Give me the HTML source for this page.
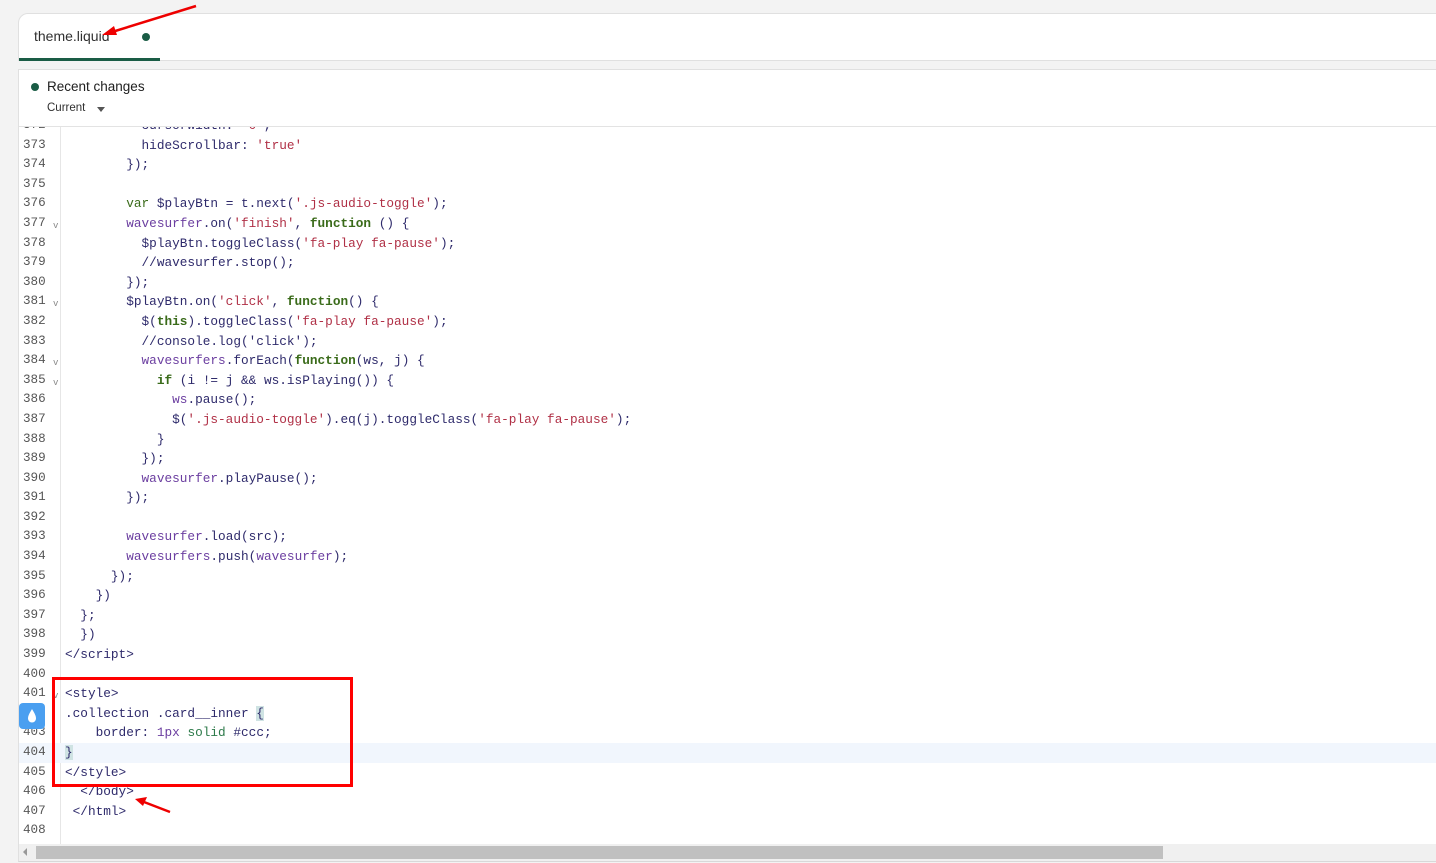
<!DOCTYPE html>
<html><head><meta charset="utf-8"><style>
*{margin:0;padding:0;box-sizing:border-box}
body{width:1436px;height:863px;background:#f3f3f3;position:relative;overflow:hidden;font-family:"Liberation Sans",sans-serif}
.tabbar{position:absolute;left:18px;top:13px;width:1430px;height:48px;background:#fff;border:1px solid #e0e0e0;border-radius:10px 0 0 0}
.tab{position:absolute;left:0;top:0;width:141px;height:47px;border-bottom:3px solid #1a5c45}
.tab span{position:absolute;left:15px;top:14px;font-size:14px;color:#303030}
.dot{position:absolute;width:8px;height:8px;border-radius:50%;background:#1a5c45}
.panel{position:absolute;left:18px;top:69px;width:1430px;height:793px;background:#fff;border:1px solid #e0e0e0;border-bottom:1px solid #d8d8d8}
.hdr{position:absolute;left:0;top:0;width:100%;height:57px;border-bottom:1px solid #e3e3e3;background:#fff;z-index:3}
.code{position:absolute;left:0;top:57px;width:100%;height:717px;overflow:hidden}
.gut{position:absolute;left:0;top:0;width:42px;height:100%;border-right:1px solid #e6e6e6}
.lines{position:absolute;left:0;top:-11px;width:100%}
.ln{height:19.6px;line-height:19.6px;position:relative;font-family:"Liberation Mono",monospace;font-size:12.75px;white-space:pre;color:#2e2a6b}
.ln .n{position:absolute;left:4px;width:28px;color:#555;font-size:12.6px}
.ln .t{position:absolute;left:46px}
.ln .f{position:absolute;left:34px;color:#888;font-size:9px;top:3px}
.s{color:#b03046}.k{color:#3a6b1a;font-weight:bold}.p{color:#6b3ea0}.g{color:#2d7a4a}
.hl{background:#f1f6fd}
.sb{position:absolute;left:0;top:774px;width:100%;height:17px;background:#f0f0f0}
.thumb{position:absolute;left:17px;top:2px;width:1127px;height:13px;background:#c0c0c0}
.br{background:#cfe3e3}
</style></head><body>
<div class="tabbar"><div class="tab"><span>theme.liquid</span></div><div class="dot" style="left:123px;top:19px"></div></div>
<div class="panel">
<div class="hdr">
<div class="dot" style="left:12px;top:13px"></div>
<div style="position:absolute;left:28px;top:9px;font-size:13.5px;color:#202020">Recent changes</div>
<div style="position:absolute;left:28px;top:32px;font-size:11.5px;color:#303030">Current</div>
<div style="position:absolute;left:78px;top:37px;border-left:4px solid transparent;border-right:4px solid transparent;border-top:5px solid #555"></div>
</div>
<div class="code"><div class="gut"></div>
<div class="lines">
<div class="ln"><span class="n">372</span><span class="t">          cursorWidth: <span class="s">'0'</span>,</span></div>
<div class="ln"><span class="n">373</span><span class="t">          hideScrollbar: <span class="s">'true'</span></span></div>
<div class="ln"><span class="n">374</span><span class="t">        });</span></div>
<div class="ln"><span class="n">375</span></div>
<div class="ln"><span class="n">376</span><span class="t">        <span class="k" style="font-weight:normal">var</span> $playBtn = t.next(<span class="s">'.js-audio-toggle'</span>);</span></div>
<div class="ln"><span class="n">377</span><span class="f">v</span><span class="t">        <span class="p">wavesurfer</span>.on(<span class="s">'finish'</span>, <span class="k">function</span> () {</span></div>
<div class="ln"><span class="n">378</span><span class="t">          $playBtn.toggleClass(<span class="s">'fa-play fa-pause'</span>);</span></div>
<div class="ln"><span class="n">379</span><span class="t">          //wavesurfer.stop();</span></div>
<div class="ln"><span class="n">380</span><span class="t">        });</span></div>
<div class="ln"><span class="n">381</span><span class="f">v</span><span class="t">        $playBtn.on(<span class="s">'click'</span>, <span class="k">function</span>() {</span></div>
<div class="ln"><span class="n">382</span><span class="t">          $(<span class="k">this</span>).toggleClass(<span class="s">'fa-play fa-pause'</span>);</span></div>
<div class="ln"><span class="n">383</span><span class="t">          //console.log('click');</span></div>
<div class="ln"><span class="n">384</span><span class="f">v</span><span class="t">          <span class="p">wavesurfers</span>.forEach(<span class="k">function</span>(ws, j) {</span></div>
<div class="ln"><span class="n">385</span><span class="f">v</span><span class="t">            <span class="k">if</span> (i != j &amp;&amp; ws.isPlaying()) {</span></div>
<div class="ln"><span class="n">386</span><span class="t">              <span class="p">ws</span>.pause();</span></div>
<div class="ln"><span class="n">387</span><span class="t">              $(<span class="s">'.js-audio-toggle'</span>).eq(j).toggleClass(<span class="s">'fa-play fa-pause'</span>);</span></div>
<div class="ln"><span class="n">388</span><span class="t">            }</span></div>
<div class="ln"><span class="n">389</span><span class="t">          });</span></div>
<div class="ln"><span class="n">390</span><span class="t">          <span class="p">wavesurfer</span>.playPause();</span></div>
<div class="ln"><span class="n">391</span><span class="t">        });</span></div>
<div class="ln"><span class="n">392</span></div>
<div class="ln"><span class="n">393</span><span class="t">        <span class="p">wavesurfer</span>.load(src);</span></div>
<div class="ln"><span class="n">394</span><span class="t">        <span class="p">wavesurfers</span>.push(<span class="p">wavesurfer</span>);</span></div>
<div class="ln"><span class="n">395</span><span class="t">      });</span></div>
<div class="ln"><span class="n">396</span><span class="t">    })</span></div>
<div class="ln"><span class="n">397</span><span class="t">  };</span></div>
<div class="ln"><span class="n">398</span><span class="t">  })</span></div>
<div class="ln"><span class="n">399</span><span class="t">&lt;/script&gt;</span></div>
<div class="ln"><span class="n">400</span></div>
<div class="ln"><span class="n">401</span><span class="f">v</span><span class="t">&lt;style&gt;</span></div>
<div class="ln"><span class="n">402</span><span class="t">.collection .card__inner <span class="br">{</span></span></div>
<div class="ln"><span class="n">403</span><span class="t">    border: <span class="p">1px</span> <span class="g">solid</span> #ccc;</span></div>
<div class="ln hl"><span class="n">404</span><span class="t"><span class="br">}</span></span></div>
<div class="ln"><span class="n">405</span><span class="t">&lt;/style&gt;</span></div>
<div class="ln"><span class="n">406</span><span class="t">  &lt;/body&gt;</span></div>
<div class="ln"><span class="n">407</span><span class="t"> &lt;/html&gt;</span></div>
<div class="ln"><span class="n">408</span></div>
</div></div>
<div class="sb"><div style="position:absolute;left:4px;top:4px;border-top:4px solid transparent;border-bottom:4px solid transparent;border-right:4px solid #999"></div><div class="thumb"></div></div>
</div>
<div style="position:absolute;left:19px;top:703px;width:26px;height:26px;background:#4a9ff0;border-radius:4px"></div>
<svg style="position:absolute;left:19px;top:703px" width="26" height="26"><path d="M13 6 C10 11 9 13 9 15.5 A4 4 0 0 0 17 15.5 C17 13 16 11 13 6Z" fill="#fff"/></svg>
<div style="position:absolute;left:52px;top:677px;width:301px;height:110px;border:3px solid #f00"></div>
<svg style="position:absolute;left:0;top:0" width="1436" height="863">
<line x1="196" y1="6" x2="112" y2="32" stroke="#e00" stroke-width="2.5"/>
<polygon points="102,35 114,26 117,35" fill="#e00"/>
<line x1="170" y1="812" x2="144" y2="802" stroke="#e00" stroke-width="2.5"/>
<polygon points="135,799 147,797 143,806" fill="#e00"/>
</svg>
</body></html>
